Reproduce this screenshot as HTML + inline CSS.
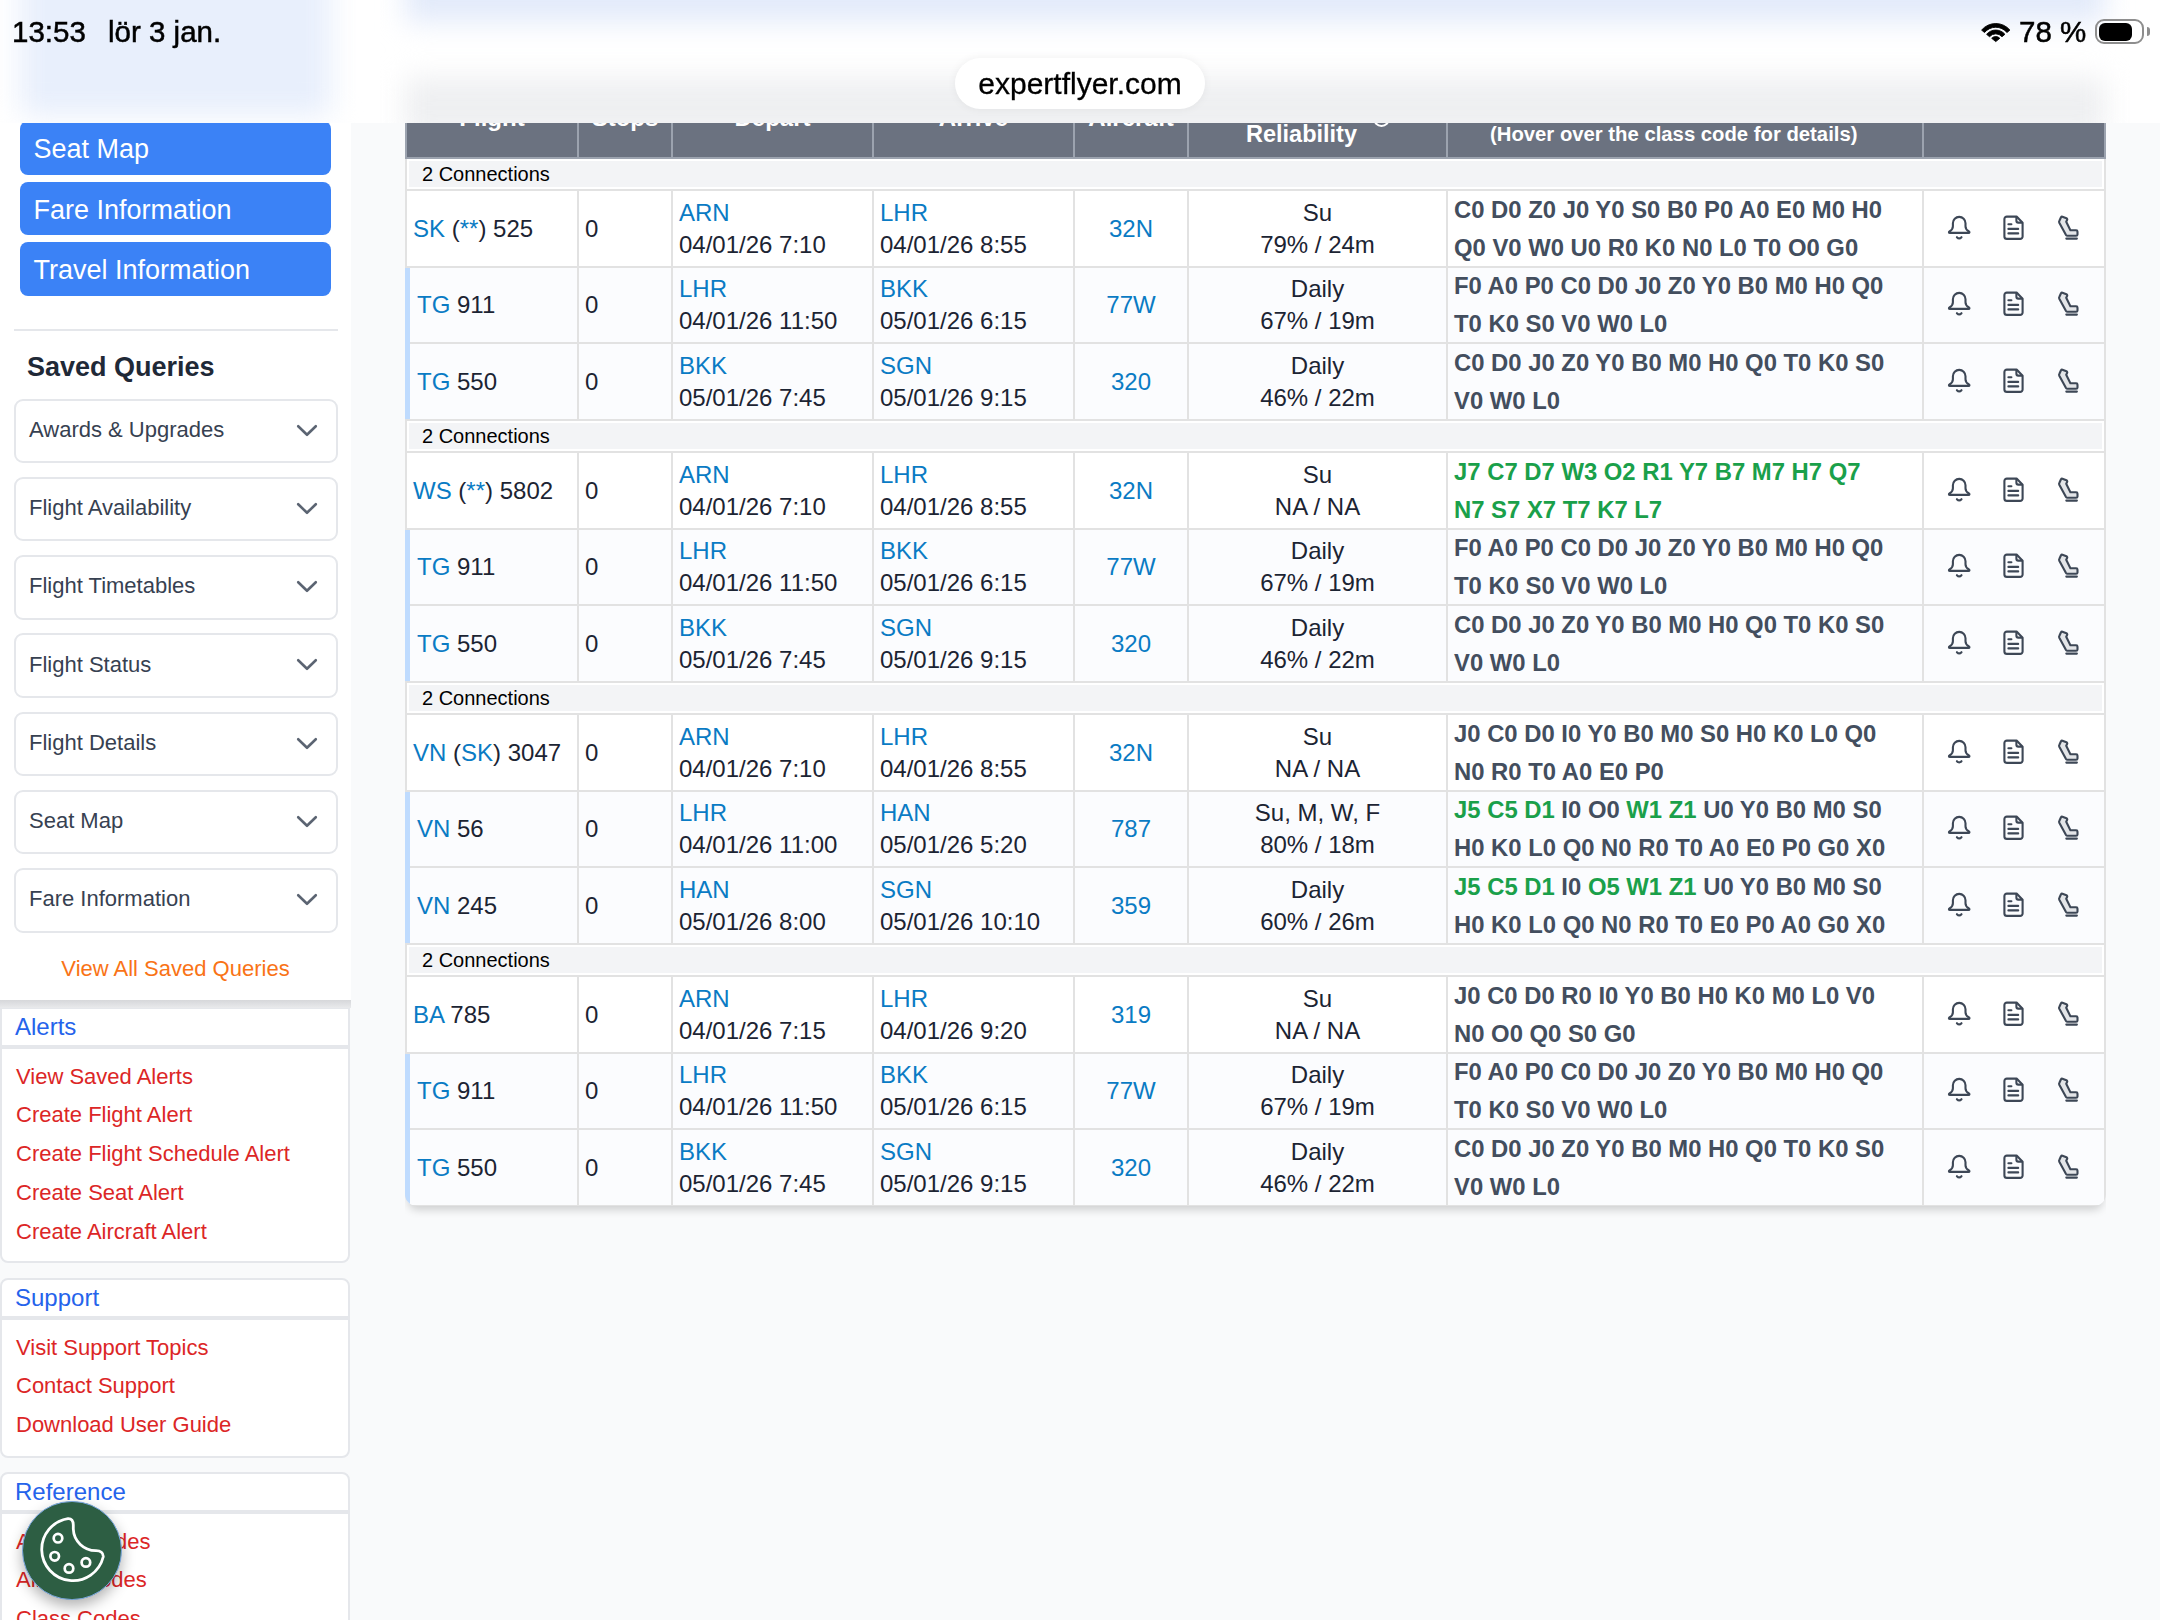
<!DOCTYPE html>
<html><head><meta charset="utf-8"><title>expertflyer</title>
<style>
*{box-sizing:border-box;margin:0;padding:0}
html,body{width:2160px;height:1620px;overflow:hidden;background:#f9fafb;font-family:"Liberation Sans",sans-serif;position:relative}
a{color:#0a7bc4;text-decoration:none}
.sidewhite{position:absolute;left:0;top:0;width:351px;height:1000px;background:#fff}
.sshadow{position:absolute;left:0;top:1000px;width:351px;height:8px;background:linear-gradient(#d6d7da,#e9eaec);z-index:2}
.btn{position:absolute;left:20px;width:311px;height:52px;background:#3b82f6;border-radius:8px;color:#fff;font-size:27px}
.btn span{position:absolute;left:13.5px;line-height:52px;white-space:nowrap}
.sep{position:absolute;left:14px;top:329px;width:324px;height:2px;background:#e5e7eb}
.sqh{position:absolute;left:27px;top:350px;font-size:27px;font-weight:bold;color:#1f2937;line-height:34px}
.dd{position:absolute;left:14px;width:324px;height:64.5px;border:2px solid #e5e7eb;border-radius:9px;background:#fff}
.dd span{position:absolute;left:13px;top:-0.7px;line-height:60px;font-size:22px;color:#374151}
.chev{position:absolute;left:279px;top:21px}
.viewall{position:absolute;left:0;width:351px;top:951.5px;text-align:center;font-size:22px;color:#f97316;line-height:34px}
.card{position:absolute;left:0;width:350px;background:#fff;border:2px solid #e5e7eb;border-radius:8px;overflow:hidden}
.ch{position:absolute;left:13px;top:0px;height:36px;line-height:36px;font-size:24px;color:#2563eb}
.chb{position:absolute;left:0;top:36px;width:100%;height:4px;background:#e5e7eb}
.links{position:absolute;left:14px;margin-top:-1.5px;font-size:22px;color:#dc2626;line-height:38.8px}
.cookie{position:absolute;left:22.3px;top:1500.5px;width:99.5px;height:99.5px;border-radius:50%;background:#2d5e43;border:1.5px solid #7aa7e0;box-shadow:0 6px 14px rgba(0,0,0,0.3)}
.tablebox{position:absolute;left:405px;top:0;width:1701px;height:1206px;border-radius:0 0 12px 12px;box-shadow:0 7px 9px -3px rgba(0,0,0,0.17);background:#e2e2e2;clip-path:inset(0px 0px -40px 0px)}
.tclip{position:absolute;left:0;top:0;width:2160px;height:1620px;clip-path:inset(0px 54px 414px 405px round 0 0 12px 12px)}
.thead{position:absolute;left:405px;top:60px;width:1701px;height:99px;background:#6b7280;border:2px solid #9ca3af;border-top:0}
.th,.th2{position:absolute;top:101px;color:#fff;font-weight:bold;font-size:24px;line-height:32px;white-space:nowrap}
.th2{font-size:23.5px}
.th{text-align:center}
.th{top:102px}
.th3{position:absolute;color:#fff;font-weight:bold;font-size:20.3px;line-height:28px;white-space:nowrap}
.infoc{position:absolute;left:1373px;top:110px;width:17px;height:17px;border:2px solid #fff;border-radius:50%}
.hvl{position:absolute;top:60px;width:2px;height:97px;background:#9ca3af}
.connw{position:absolute;left:407px;width:1697px;height:30px;background:#fff}
.conn{position:absolute;left:409px;width:1693px;height:26px;background:#f3f4f6}
.conn span{position:absolute;left:13px;top:-1px;font-size:20px;line-height:28px;color:#000}
.hl{position:absolute;left:407px;width:1697px;height:2px;background:#e2e2e2}
.row{position:absolute;left:407px;width:1697px;background:#fff}
.row.sub{background:#fbfcfe}
.vl{position:absolute;width:2px;background:#e2e2e2}
.stripe{position:absolute;left:405px;width:4.5px;background:#bfdbfe}
.t1,.t2{position:absolute;font-size:24px;line-height:32px;color:#1c2433;white-space:nowrap}
.ctr{text-align:center}
.cc{position:absolute;font-size:23.85px;line-height:38px;font-weight:bold;color:#434e5e;white-space:nowrap}
.g{color:#1aa04a}
.ic{position:absolute}
.tb{position:absolute;left:0;top:0;width:2160px;height:123px;overflow:hidden;background:#fff}
.blurwrap{position:absolute;left:0;top:0;width:2160px;height:123px;filter:blur(14px)}
.status-l{position:absolute;left:12px;top:14px;font-size:29.5px;line-height:36px;color:#000;-webkit-text-stroke:0.5px #000}
.status-r{position:absolute;left:2019px;top:14px;font-size:29.5px;line-height:36px;color:#000;-webkit-text-stroke:0.5px #000}
.batt{position:absolute;left:2095.3px;top:19.3px;width:49px;height:25px;border:2px solid #8e8e8e;border-radius:9px}
.battin{position:absolute;left:1.6px;top:1.4px;width:33px;height:18px;background:#000;border-radius:6px}
.nub{position:absolute;left:2146.5px;top:27px;width:3.5px;height:9px;background:#8e8e8e;border-radius:0 4px 4px 0}
.pill{position:absolute;left:955px;top:58px;width:250px;height:51px;background:#fff;border-radius:26px;box-shadow:0 0 10px rgba(0,0,0,0.06);text-align:center;font-size:30px;line-height:51px;color:#000;-webkit-text-stroke:0.3px #000}
</style></head><body>
<div class="sidewhite"></div>
<div class="btn" style="top:121px;height:54px"><span style="top:1.6px">Seat Map</span></div>
<div class="btn" style="top:182px;height:53px"><span style="top:1.6px">Fare Information</span></div>
<div class="btn" style="top:242px;height:54px"><span style="top:1.6px">Travel Information</span></div>
<div class="sep"></div>
<div class="sqh">Saved Queries</div>
<div class="dd" style="top:398.5px"><span>Awards &amp; Upgrades</span><svg class="chev" width="24" height="16" viewBox="0 0 24 16"><path d="M3.2 4.2l8.8 8.6 8.8-8.6" fill="none" stroke="#5b6472" stroke-width="2.6" stroke-linecap="round" stroke-linejoin="round"/></svg></div>
<div class="dd" style="top:476.8px"><span>Flight Availability</span><svg class="chev" width="24" height="16" viewBox="0 0 24 16"><path d="M3.2 4.2l8.8 8.6 8.8-8.6" fill="none" stroke="#5b6472" stroke-width="2.6" stroke-linecap="round" stroke-linejoin="round"/></svg></div>
<div class="dd" style="top:555.0px"><span>Flight Timetables</span><svg class="chev" width="24" height="16" viewBox="0 0 24 16"><path d="M3.2 4.2l8.8 8.6 8.8-8.6" fill="none" stroke="#5b6472" stroke-width="2.6" stroke-linecap="round" stroke-linejoin="round"/></svg></div>
<div class="dd" style="top:633.3px"><span>Flight Status</span><svg class="chev" width="24" height="16" viewBox="0 0 24 16"><path d="M3.2 4.2l8.8 8.6 8.8-8.6" fill="none" stroke="#5b6472" stroke-width="2.6" stroke-linecap="round" stroke-linejoin="round"/></svg></div>
<div class="dd" style="top:711.6px"><span>Flight Details</span><svg class="chev" width="24" height="16" viewBox="0 0 24 16"><path d="M3.2 4.2l8.8 8.6 8.8-8.6" fill="none" stroke="#5b6472" stroke-width="2.6" stroke-linecap="round" stroke-linejoin="round"/></svg></div>
<div class="dd" style="top:789.8px"><span>Seat Map</span><svg class="chev" width="24" height="16" viewBox="0 0 24 16"><path d="M3.2 4.2l8.8 8.6 8.8-8.6" fill="none" stroke="#5b6472" stroke-width="2.6" stroke-linecap="round" stroke-linejoin="round"/></svg></div>
<div class="dd" style="top:868.1px"><span>Fare Information</span><svg class="chev" width="24" height="16" viewBox="0 0 24 16"><path d="M3.2 4.2l8.8 8.6 8.8-8.6" fill="none" stroke="#5b6472" stroke-width="2.6" stroke-linecap="round" stroke-linejoin="round"/></svg></div>
<div class="viewall">View All Saved Queries</div>
<div class="sshadow"></div>
<div class="card" style="top:1007px;height:256px;border-top-left-radius:0;border-top-right-radius:0"><div class="ch">Alerts</div><div class="chb"></div><div class="links" style="top:50px">View Saved Alerts<br>Create Flight Alert<br>Create Flight Schedule Alert<br>Create Seat Alert<br>Create Aircraft Alert</div></div>
<div class="card" style="top:1278px;height:180px"><div class="ch">Support</div><div class="chb"></div><div class="links" style="top:50px">Visit Support Topics<br>Contact Support<br>Download User Guide</div></div>
<div class="card" style="top:1472px;height:200px"><div class="ch">Reference</div><div class="chb"></div><div class="links" style="top:50px">Airport Codes<br>Airline Codes<br>Class Codes</div></div>
<div class="cookie"><svg width="100" height="100" viewBox="0 0 100 100" style="position:absolute;left:-1.3px;top:-0.6px"><path d="M46 17.6C49.5 17.4 51.3 20 51.3 24V28A22.5 22.5 0 0 0 74 49.6C78.5 49.6 81.6 52 81.2 56A31.2 31.2 0 1 1 46 17.6Z" fill="none" stroke="#fff" stroke-width="2.8" stroke-linejoin="round"/><circle cx="36" cy="37.2" r="4.3" fill="none" stroke="#fff" stroke-width="2.7"/><circle cx="32.7" cy="55.3" r="4.3" fill="none" stroke="#fff" stroke-width="2.7"/><circle cx="47" cy="67.4" r="4.3" fill="none" stroke="#fff" stroke-width="2.7"/><circle cx="63.9" cy="61.4" r="4.3" fill="none" stroke="#fff" stroke-width="2.7"/></svg></div>
<div class="tablebox"></div>
<div class="tclip">
<div class="thead"></div>
<div class="th" style="left:407px;width:170px">Flight</div>
<div class="th" style="left:579px;width:92px">Stops</div>
<div class="th" style="left:673px;width:199px">Depart</div>
<div class="th" style="left:874px;width:199px">Arrive</div>
<div class="th" style="left:1075px;width:112px">Aircraft</div>
<div class="th2" style="left:1246px;top:117.8px">Reliability</div>
<div class="infoc"></div>
<div class="th3" style="left:1490px;top:120px">(Hover over the class code for details)</div>
<div class="hvl" style="left:577px"></div>
<div class="hvl" style="left:671px"></div>
<div class="hvl" style="left:872px"></div>
<div class="hvl" style="left:1073px"></div>
<div class="hvl" style="left:1187px"></div>
<div class="hvl" style="left:1446px"></div>
<div class="hvl" style="left:1922px"></div>
<div class="connw" style="top:159px"></div>
<div class="conn" style="top:161px"><span>2 Connections</span></div>
<div class="hl" style="top:189px"></div>
<div class="row" style="top:191px;height:75px"></div>
<div class="hl" style="top:266px"></div>
<div class="vl" style="left:577px;top:191px;height:75px"></div>
<div class="vl" style="left:671px;top:191px;height:75px"></div>
<div class="vl" style="left:872px;top:191px;height:75px"></div>
<div class="vl" style="left:1073px;top:191px;height:75px"></div>
<div class="vl" style="left:1187px;top:191px;height:75px"></div>
<div class="vl" style="left:1446px;top:191px;height:75px"></div>
<div class="vl" style="left:1922px;top:191px;height:75px"></div>
<div class="t1" style="left:413px;top:212.5px"><a>SK</a> (<a>**</a>) 525</div>
<div class="t1" style="left:585px;top:212.5px">0</div>
<div class="t2" style="left:679px;top:196.5px"><a>ARN</a><br>04/01/26 7:10</div>
<div class="t2" style="left:880px;top:196.5px"><a>LHR</a><br>04/01/26 8:55</div>
<div class="t1 ctr" style="left:1075px;width:112px;top:212.5px"><a>32N</a></div>
<div class="t2 ctr" style="left:1189px;width:257px;top:196.5px">Su<br>79% / 24m</div>
<div class="cc" style="left:1454px;top:190.5px">C0 D0 Z0 J0 Y0 S0 B0 P0 A0 E0 M0 H0<br>Q0 V0 W0 U0 R0 K0 N0 L0 T0 O0 G0</div>
<svg class="ic" style="left:1944.0px;top:213.5px" width="30" height="30" viewBox="0 0 30 30"><path d="M8.9 9.2A6.3 6.3 0 0 1 21.5 9.2V12.2C21.5 14.6 22.4 15.9 24.6 17.1C25.9 17.8 25.7 18.9 24.4 18.9H6C4.7 18.9 4.5 17.8 5.8 17.1C8 15.9 8.9 14.6 8.9 12.2Z" fill="none" stroke="#3d4756" stroke-width="2.1" stroke-linejoin="round"/><path d="M12.9 23.2Q15.2 25.6 17.5 23.2" fill="none" stroke="#3d4756" stroke-width="2.1" stroke-linecap="round"/></svg>
<svg class="ic" style="left:1999.0px;top:213.5px" width="30" height="30" viewBox="0 0 30 30"><path d="M7.9 2.6H17.6L23.6 8.7V22.4A2.5 2.5 0 0 1 21.1 24.9H7.9A2.5 2.5 0 0 1 5.4 22.4V5.1A2.5 2.5 0 0 1 7.9 2.6Z" fill="none" stroke="#3d4756" stroke-width="2.1" stroke-linejoin="round"/><path d="M17.4 2.9V6.8A1.8 1.8 0 0 0 19.2 8.6H23.3" fill="none" stroke="#3d4756" stroke-width="2.1" stroke-linejoin="round"/><path d="M9.4 10.3H12.4M9.4 14.9H19.2M9.4 19.4H19.2" stroke="#3d4756" stroke-width="2.1" stroke-linecap="round"/></svg>
<svg class="ic" style="left:2054.0px;top:213.5px" width="30" height="30" viewBox="0 0 30 30"><path d="M8.4 2.7L12.4 4.3C13.2 4.6 13.5 5.4 13.1 6.1L12.2 7.8L16.4 16.3H22.1C22.9 16.3 23.5 16.9 23.5 17.7V20.4C23.5 21.2 22.9 21.8 22.1 21.8H13.4C12.8 21.8 12.3 21.5 12 21L5.3 8.7C5 8.1 5 7.5 5.3 7L7 3.3C7.3 2.8 7.8 2.5 8.4 2.7Z" fill="#e3e5e8" stroke="#3d4756" stroke-width="2.1" stroke-linejoin="round"/><path d="M12.3 24.6H22.9" stroke="#3d4756" stroke-width="2.1" stroke-linecap="round"/></svg>
<div class="row sub" style="top:268px;height:74px"></div>
<div class="hl" style="top:342px"></div>
<div class="vl" style="left:577px;top:268px;height:74px"></div>
<div class="vl" style="left:671px;top:268px;height:74px"></div>
<div class="vl" style="left:872px;top:268px;height:74px"></div>
<div class="vl" style="left:1073px;top:268px;height:74px"></div>
<div class="vl" style="left:1187px;top:268px;height:74px"></div>
<div class="vl" style="left:1446px;top:268px;height:74px"></div>
<div class="vl" style="left:1922px;top:268px;height:74px"></div>
<div class="stripe" style="top:268px;height:74px"></div>
<div class="t1" style="left:417px;top:289.0px"><a>TG</a> 911</div>
<div class="t1" style="left:585px;top:289.0px">0</div>
<div class="t2" style="left:679px;top:273.0px"><a>LHR</a><br>04/01/26 11:50</div>
<div class="t2" style="left:880px;top:273.0px"><a>BKK</a><br>05/01/26 6:15</div>
<div class="t1 ctr" style="left:1075px;width:112px;top:289.0px"><a>77W</a></div>
<div class="t2 ctr" style="left:1189px;width:257px;top:273.0px">Daily<br>67% / 19m</div>
<div class="cc" style="left:1454px;top:267.0px">F0 A0 P0 C0 D0 J0 Z0 Y0 B0 M0 H0 Q0<br>T0 K0 S0 V0 W0 L0</div>
<svg class="ic" style="left:1944.0px;top:290.0px" width="30" height="30" viewBox="0 0 30 30"><path d="M8.9 9.2A6.3 6.3 0 0 1 21.5 9.2V12.2C21.5 14.6 22.4 15.9 24.6 17.1C25.9 17.8 25.7 18.9 24.4 18.9H6C4.7 18.9 4.5 17.8 5.8 17.1C8 15.9 8.9 14.6 8.9 12.2Z" fill="none" stroke="#3d4756" stroke-width="2.1" stroke-linejoin="round"/><path d="M12.9 23.2Q15.2 25.6 17.5 23.2" fill="none" stroke="#3d4756" stroke-width="2.1" stroke-linecap="round"/></svg>
<svg class="ic" style="left:1999.0px;top:290.0px" width="30" height="30" viewBox="0 0 30 30"><path d="M7.9 2.6H17.6L23.6 8.7V22.4A2.5 2.5 0 0 1 21.1 24.9H7.9A2.5 2.5 0 0 1 5.4 22.4V5.1A2.5 2.5 0 0 1 7.9 2.6Z" fill="none" stroke="#3d4756" stroke-width="2.1" stroke-linejoin="round"/><path d="M17.4 2.9V6.8A1.8 1.8 0 0 0 19.2 8.6H23.3" fill="none" stroke="#3d4756" stroke-width="2.1" stroke-linejoin="round"/><path d="M9.4 10.3H12.4M9.4 14.9H19.2M9.4 19.4H19.2" stroke="#3d4756" stroke-width="2.1" stroke-linecap="round"/></svg>
<svg class="ic" style="left:2054.0px;top:290.0px" width="30" height="30" viewBox="0 0 30 30"><path d="M8.4 2.7L12.4 4.3C13.2 4.6 13.5 5.4 13.1 6.1L12.2 7.8L16.4 16.3H22.1C22.9 16.3 23.5 16.9 23.5 17.7V20.4C23.5 21.2 22.9 21.8 22.1 21.8H13.4C12.8 21.8 12.3 21.5 12 21L5.3 8.7C5 8.1 5 7.5 5.3 7L7 3.3C7.3 2.8 7.8 2.5 8.4 2.7Z" fill="#e3e5e8" stroke="#3d4756" stroke-width="2.1" stroke-linejoin="round"/><path d="M12.3 24.6H22.9" stroke="#3d4756" stroke-width="2.1" stroke-linecap="round"/></svg>
<div class="row sub" style="top:344px;height:75px"></div>
<div class="vl" style="left:577px;top:344px;height:75px"></div>
<div class="vl" style="left:671px;top:344px;height:75px"></div>
<div class="vl" style="left:872px;top:344px;height:75px"></div>
<div class="vl" style="left:1073px;top:344px;height:75px"></div>
<div class="vl" style="left:1187px;top:344px;height:75px"></div>
<div class="vl" style="left:1446px;top:344px;height:75px"></div>
<div class="vl" style="left:1922px;top:344px;height:75px"></div>
<div class="stripe" style="top:342px;height:77px"></div>
<div class="t1" style="left:417px;top:365.5px"><a>TG</a> 550</div>
<div class="t1" style="left:585px;top:365.5px">0</div>
<div class="t2" style="left:679px;top:349.5px"><a>BKK</a><br>05/01/26 7:45</div>
<div class="t2" style="left:880px;top:349.5px"><a>SGN</a><br>05/01/26 9:15</div>
<div class="t1 ctr" style="left:1075px;width:112px;top:365.5px"><a>320</a></div>
<div class="t2 ctr" style="left:1189px;width:257px;top:349.5px">Daily<br>46% / 22m</div>
<div class="cc" style="left:1454px;top:343.5px">C0 D0 J0 Z0 Y0 B0 M0 H0 Q0 T0 K0 S0<br>V0 W0 L0</div>
<svg class="ic" style="left:1944.0px;top:366.5px" width="30" height="30" viewBox="0 0 30 30"><path d="M8.9 9.2A6.3 6.3 0 0 1 21.5 9.2V12.2C21.5 14.6 22.4 15.9 24.6 17.1C25.9 17.8 25.7 18.9 24.4 18.9H6C4.7 18.9 4.5 17.8 5.8 17.1C8 15.9 8.9 14.6 8.9 12.2Z" fill="none" stroke="#3d4756" stroke-width="2.1" stroke-linejoin="round"/><path d="M12.9 23.2Q15.2 25.6 17.5 23.2" fill="none" stroke="#3d4756" stroke-width="2.1" stroke-linecap="round"/></svg>
<svg class="ic" style="left:1999.0px;top:366.5px" width="30" height="30" viewBox="0 0 30 30"><path d="M7.9 2.6H17.6L23.6 8.7V22.4A2.5 2.5 0 0 1 21.1 24.9H7.9A2.5 2.5 0 0 1 5.4 22.4V5.1A2.5 2.5 0 0 1 7.9 2.6Z" fill="none" stroke="#3d4756" stroke-width="2.1" stroke-linejoin="round"/><path d="M17.4 2.9V6.8A1.8 1.8 0 0 0 19.2 8.6H23.3" fill="none" stroke="#3d4756" stroke-width="2.1" stroke-linejoin="round"/><path d="M9.4 10.3H12.4M9.4 14.9H19.2M9.4 19.4H19.2" stroke="#3d4756" stroke-width="2.1" stroke-linecap="round"/></svg>
<svg class="ic" style="left:2054.0px;top:366.5px" width="30" height="30" viewBox="0 0 30 30"><path d="M8.4 2.7L12.4 4.3C13.2 4.6 13.5 5.4 13.1 6.1L12.2 7.8L16.4 16.3H22.1C22.9 16.3 23.5 16.9 23.5 17.7V20.4C23.5 21.2 22.9 21.8 22.1 21.8H13.4C12.8 21.8 12.3 21.5 12 21L5.3 8.7C5 8.1 5 7.5 5.3 7L7 3.3C7.3 2.8 7.8 2.5 8.4 2.7Z" fill="#e3e5e8" stroke="#3d4756" stroke-width="2.1" stroke-linejoin="round"/><path d="M12.3 24.6H22.9" stroke="#3d4756" stroke-width="2.1" stroke-linecap="round"/></svg>
<div class="connw" style="top:421px"></div>
<div class="conn" style="top:423px"><span>2 Connections</span></div>
<div class="hl" style="top:451px"></div>
<div class="row" style="top:453px;height:75px"></div>
<div class="hl" style="top:528px"></div>
<div class="vl" style="left:577px;top:453px;height:75px"></div>
<div class="vl" style="left:671px;top:453px;height:75px"></div>
<div class="vl" style="left:872px;top:453px;height:75px"></div>
<div class="vl" style="left:1073px;top:453px;height:75px"></div>
<div class="vl" style="left:1187px;top:453px;height:75px"></div>
<div class="vl" style="left:1446px;top:453px;height:75px"></div>
<div class="vl" style="left:1922px;top:453px;height:75px"></div>
<div class="t1" style="left:413px;top:474.5px"><a>WS</a> (<a>**</a>) 5802</div>
<div class="t1" style="left:585px;top:474.5px">0</div>
<div class="t2" style="left:679px;top:458.5px"><a>ARN</a><br>04/01/26 7:10</div>
<div class="t2" style="left:880px;top:458.5px"><a>LHR</a><br>04/01/26 8:55</div>
<div class="t1 ctr" style="left:1075px;width:112px;top:474.5px"><a>32N</a></div>
<div class="t2 ctr" style="left:1189px;width:257px;top:458.5px">Su<br>NA / NA</div>
<div class="cc" style="left:1454px;top:452.5px"><span class="g">J7</span> <span class="g">C7</span> <span class="g">D7</span> <span class="g">W3</span> <span class="g">O2</span> <span class="g">R1</span> <span class="g">Y7</span> <span class="g">B7</span> <span class="g">M7</span> <span class="g">H7</span> <span class="g">Q7</span><br><span class="g">N7</span> <span class="g">S7</span> <span class="g">X7</span> <span class="g">T7</span> <span class="g">K7</span> <span class="g">L7</span></div>
<svg class="ic" style="left:1944.0px;top:475.5px" width="30" height="30" viewBox="0 0 30 30"><path d="M8.9 9.2A6.3 6.3 0 0 1 21.5 9.2V12.2C21.5 14.6 22.4 15.9 24.6 17.1C25.9 17.8 25.7 18.9 24.4 18.9H6C4.7 18.9 4.5 17.8 5.8 17.1C8 15.9 8.9 14.6 8.9 12.2Z" fill="none" stroke="#3d4756" stroke-width="2.1" stroke-linejoin="round"/><path d="M12.9 23.2Q15.2 25.6 17.5 23.2" fill="none" stroke="#3d4756" stroke-width="2.1" stroke-linecap="round"/></svg>
<svg class="ic" style="left:1999.0px;top:475.5px" width="30" height="30" viewBox="0 0 30 30"><path d="M7.9 2.6H17.6L23.6 8.7V22.4A2.5 2.5 0 0 1 21.1 24.9H7.9A2.5 2.5 0 0 1 5.4 22.4V5.1A2.5 2.5 0 0 1 7.9 2.6Z" fill="none" stroke="#3d4756" stroke-width="2.1" stroke-linejoin="round"/><path d="M17.4 2.9V6.8A1.8 1.8 0 0 0 19.2 8.6H23.3" fill="none" stroke="#3d4756" stroke-width="2.1" stroke-linejoin="round"/><path d="M9.4 10.3H12.4M9.4 14.9H19.2M9.4 19.4H19.2" stroke="#3d4756" stroke-width="2.1" stroke-linecap="round"/></svg>
<svg class="ic" style="left:2054.0px;top:475.5px" width="30" height="30" viewBox="0 0 30 30"><path d="M8.4 2.7L12.4 4.3C13.2 4.6 13.5 5.4 13.1 6.1L12.2 7.8L16.4 16.3H22.1C22.9 16.3 23.5 16.9 23.5 17.7V20.4C23.5 21.2 22.9 21.8 22.1 21.8H13.4C12.8 21.8 12.3 21.5 12 21L5.3 8.7C5 8.1 5 7.5 5.3 7L7 3.3C7.3 2.8 7.8 2.5 8.4 2.7Z" fill="#e3e5e8" stroke="#3d4756" stroke-width="2.1" stroke-linejoin="round"/><path d="M12.3 24.6H22.9" stroke="#3d4756" stroke-width="2.1" stroke-linecap="round"/></svg>
<div class="row sub" style="top:530px;height:74px"></div>
<div class="hl" style="top:604px"></div>
<div class="vl" style="left:577px;top:530px;height:74px"></div>
<div class="vl" style="left:671px;top:530px;height:74px"></div>
<div class="vl" style="left:872px;top:530px;height:74px"></div>
<div class="vl" style="left:1073px;top:530px;height:74px"></div>
<div class="vl" style="left:1187px;top:530px;height:74px"></div>
<div class="vl" style="left:1446px;top:530px;height:74px"></div>
<div class="vl" style="left:1922px;top:530px;height:74px"></div>
<div class="stripe" style="top:530px;height:74px"></div>
<div class="t1" style="left:417px;top:551.0px"><a>TG</a> 911</div>
<div class="t1" style="left:585px;top:551.0px">0</div>
<div class="t2" style="left:679px;top:535.0px"><a>LHR</a><br>04/01/26 11:50</div>
<div class="t2" style="left:880px;top:535.0px"><a>BKK</a><br>05/01/26 6:15</div>
<div class="t1 ctr" style="left:1075px;width:112px;top:551.0px"><a>77W</a></div>
<div class="t2 ctr" style="left:1189px;width:257px;top:535.0px">Daily<br>67% / 19m</div>
<div class="cc" style="left:1454px;top:529.0px">F0 A0 P0 C0 D0 J0 Z0 Y0 B0 M0 H0 Q0<br>T0 K0 S0 V0 W0 L0</div>
<svg class="ic" style="left:1944.0px;top:552.0px" width="30" height="30" viewBox="0 0 30 30"><path d="M8.9 9.2A6.3 6.3 0 0 1 21.5 9.2V12.2C21.5 14.6 22.4 15.9 24.6 17.1C25.9 17.8 25.7 18.9 24.4 18.9H6C4.7 18.9 4.5 17.8 5.8 17.1C8 15.9 8.9 14.6 8.9 12.2Z" fill="none" stroke="#3d4756" stroke-width="2.1" stroke-linejoin="round"/><path d="M12.9 23.2Q15.2 25.6 17.5 23.2" fill="none" stroke="#3d4756" stroke-width="2.1" stroke-linecap="round"/></svg>
<svg class="ic" style="left:1999.0px;top:552.0px" width="30" height="30" viewBox="0 0 30 30"><path d="M7.9 2.6H17.6L23.6 8.7V22.4A2.5 2.5 0 0 1 21.1 24.9H7.9A2.5 2.5 0 0 1 5.4 22.4V5.1A2.5 2.5 0 0 1 7.9 2.6Z" fill="none" stroke="#3d4756" stroke-width="2.1" stroke-linejoin="round"/><path d="M17.4 2.9V6.8A1.8 1.8 0 0 0 19.2 8.6H23.3" fill="none" stroke="#3d4756" stroke-width="2.1" stroke-linejoin="round"/><path d="M9.4 10.3H12.4M9.4 14.9H19.2M9.4 19.4H19.2" stroke="#3d4756" stroke-width="2.1" stroke-linecap="round"/></svg>
<svg class="ic" style="left:2054.0px;top:552.0px" width="30" height="30" viewBox="0 0 30 30"><path d="M8.4 2.7L12.4 4.3C13.2 4.6 13.5 5.4 13.1 6.1L12.2 7.8L16.4 16.3H22.1C22.9 16.3 23.5 16.9 23.5 17.7V20.4C23.5 21.2 22.9 21.8 22.1 21.8H13.4C12.8 21.8 12.3 21.5 12 21L5.3 8.7C5 8.1 5 7.5 5.3 7L7 3.3C7.3 2.8 7.8 2.5 8.4 2.7Z" fill="#e3e5e8" stroke="#3d4756" stroke-width="2.1" stroke-linejoin="round"/><path d="M12.3 24.6H22.9" stroke="#3d4756" stroke-width="2.1" stroke-linecap="round"/></svg>
<div class="row sub" style="top:606px;height:75px"></div>
<div class="vl" style="left:577px;top:606px;height:75px"></div>
<div class="vl" style="left:671px;top:606px;height:75px"></div>
<div class="vl" style="left:872px;top:606px;height:75px"></div>
<div class="vl" style="left:1073px;top:606px;height:75px"></div>
<div class="vl" style="left:1187px;top:606px;height:75px"></div>
<div class="vl" style="left:1446px;top:606px;height:75px"></div>
<div class="vl" style="left:1922px;top:606px;height:75px"></div>
<div class="stripe" style="top:604px;height:77px"></div>
<div class="t1" style="left:417px;top:627.5px"><a>TG</a> 550</div>
<div class="t1" style="left:585px;top:627.5px">0</div>
<div class="t2" style="left:679px;top:611.5px"><a>BKK</a><br>05/01/26 7:45</div>
<div class="t2" style="left:880px;top:611.5px"><a>SGN</a><br>05/01/26 9:15</div>
<div class="t1 ctr" style="left:1075px;width:112px;top:627.5px"><a>320</a></div>
<div class="t2 ctr" style="left:1189px;width:257px;top:611.5px">Daily<br>46% / 22m</div>
<div class="cc" style="left:1454px;top:605.5px">C0 D0 J0 Z0 Y0 B0 M0 H0 Q0 T0 K0 S0<br>V0 W0 L0</div>
<svg class="ic" style="left:1944.0px;top:628.5px" width="30" height="30" viewBox="0 0 30 30"><path d="M8.9 9.2A6.3 6.3 0 0 1 21.5 9.2V12.2C21.5 14.6 22.4 15.9 24.6 17.1C25.9 17.8 25.7 18.9 24.4 18.9H6C4.7 18.9 4.5 17.8 5.8 17.1C8 15.9 8.9 14.6 8.9 12.2Z" fill="none" stroke="#3d4756" stroke-width="2.1" stroke-linejoin="round"/><path d="M12.9 23.2Q15.2 25.6 17.5 23.2" fill="none" stroke="#3d4756" stroke-width="2.1" stroke-linecap="round"/></svg>
<svg class="ic" style="left:1999.0px;top:628.5px" width="30" height="30" viewBox="0 0 30 30"><path d="M7.9 2.6H17.6L23.6 8.7V22.4A2.5 2.5 0 0 1 21.1 24.9H7.9A2.5 2.5 0 0 1 5.4 22.4V5.1A2.5 2.5 0 0 1 7.9 2.6Z" fill="none" stroke="#3d4756" stroke-width="2.1" stroke-linejoin="round"/><path d="M17.4 2.9V6.8A1.8 1.8 0 0 0 19.2 8.6H23.3" fill="none" stroke="#3d4756" stroke-width="2.1" stroke-linejoin="round"/><path d="M9.4 10.3H12.4M9.4 14.9H19.2M9.4 19.4H19.2" stroke="#3d4756" stroke-width="2.1" stroke-linecap="round"/></svg>
<svg class="ic" style="left:2054.0px;top:628.5px" width="30" height="30" viewBox="0 0 30 30"><path d="M8.4 2.7L12.4 4.3C13.2 4.6 13.5 5.4 13.1 6.1L12.2 7.8L16.4 16.3H22.1C22.9 16.3 23.5 16.9 23.5 17.7V20.4C23.5 21.2 22.9 21.8 22.1 21.8H13.4C12.8 21.8 12.3 21.5 12 21L5.3 8.7C5 8.1 5 7.5 5.3 7L7 3.3C7.3 2.8 7.8 2.5 8.4 2.7Z" fill="#e3e5e8" stroke="#3d4756" stroke-width="2.1" stroke-linejoin="round"/><path d="M12.3 24.6H22.9" stroke="#3d4756" stroke-width="2.1" stroke-linecap="round"/></svg>
<div class="connw" style="top:683px"></div>
<div class="conn" style="top:685px"><span>2 Connections</span></div>
<div class="hl" style="top:713px"></div>
<div class="row" style="top:715px;height:75px"></div>
<div class="hl" style="top:790px"></div>
<div class="vl" style="left:577px;top:715px;height:75px"></div>
<div class="vl" style="left:671px;top:715px;height:75px"></div>
<div class="vl" style="left:872px;top:715px;height:75px"></div>
<div class="vl" style="left:1073px;top:715px;height:75px"></div>
<div class="vl" style="left:1187px;top:715px;height:75px"></div>
<div class="vl" style="left:1446px;top:715px;height:75px"></div>
<div class="vl" style="left:1922px;top:715px;height:75px"></div>
<div class="t1" style="left:413px;top:736.5px"><a>VN</a> (<a>SK</a>) 3047</div>
<div class="t1" style="left:585px;top:736.5px">0</div>
<div class="t2" style="left:679px;top:720.5px"><a>ARN</a><br>04/01/26 7:10</div>
<div class="t2" style="left:880px;top:720.5px"><a>LHR</a><br>04/01/26 8:55</div>
<div class="t1 ctr" style="left:1075px;width:112px;top:736.5px"><a>32N</a></div>
<div class="t2 ctr" style="left:1189px;width:257px;top:720.5px">Su<br>NA / NA</div>
<div class="cc" style="left:1454px;top:714.5px">J0 C0 D0 I0 Y0 B0 M0 S0 H0 K0 L0 Q0<br>N0 R0 T0 A0 E0 P0</div>
<svg class="ic" style="left:1944.0px;top:737.5px" width="30" height="30" viewBox="0 0 30 30"><path d="M8.9 9.2A6.3 6.3 0 0 1 21.5 9.2V12.2C21.5 14.6 22.4 15.9 24.6 17.1C25.9 17.8 25.7 18.9 24.4 18.9H6C4.7 18.9 4.5 17.8 5.8 17.1C8 15.9 8.9 14.6 8.9 12.2Z" fill="none" stroke="#3d4756" stroke-width="2.1" stroke-linejoin="round"/><path d="M12.9 23.2Q15.2 25.6 17.5 23.2" fill="none" stroke="#3d4756" stroke-width="2.1" stroke-linecap="round"/></svg>
<svg class="ic" style="left:1999.0px;top:737.5px" width="30" height="30" viewBox="0 0 30 30"><path d="M7.9 2.6H17.6L23.6 8.7V22.4A2.5 2.5 0 0 1 21.1 24.9H7.9A2.5 2.5 0 0 1 5.4 22.4V5.1A2.5 2.5 0 0 1 7.9 2.6Z" fill="none" stroke="#3d4756" stroke-width="2.1" stroke-linejoin="round"/><path d="M17.4 2.9V6.8A1.8 1.8 0 0 0 19.2 8.6H23.3" fill="none" stroke="#3d4756" stroke-width="2.1" stroke-linejoin="round"/><path d="M9.4 10.3H12.4M9.4 14.9H19.2M9.4 19.4H19.2" stroke="#3d4756" stroke-width="2.1" stroke-linecap="round"/></svg>
<svg class="ic" style="left:2054.0px;top:737.5px" width="30" height="30" viewBox="0 0 30 30"><path d="M8.4 2.7L12.4 4.3C13.2 4.6 13.5 5.4 13.1 6.1L12.2 7.8L16.4 16.3H22.1C22.9 16.3 23.5 16.9 23.5 17.7V20.4C23.5 21.2 22.9 21.8 22.1 21.8H13.4C12.8 21.8 12.3 21.5 12 21L5.3 8.7C5 8.1 5 7.5 5.3 7L7 3.3C7.3 2.8 7.8 2.5 8.4 2.7Z" fill="#e3e5e8" stroke="#3d4756" stroke-width="2.1" stroke-linejoin="round"/><path d="M12.3 24.6H22.9" stroke="#3d4756" stroke-width="2.1" stroke-linecap="round"/></svg>
<div class="row sub" style="top:792px;height:74px"></div>
<div class="hl" style="top:866px"></div>
<div class="vl" style="left:577px;top:792px;height:74px"></div>
<div class="vl" style="left:671px;top:792px;height:74px"></div>
<div class="vl" style="left:872px;top:792px;height:74px"></div>
<div class="vl" style="left:1073px;top:792px;height:74px"></div>
<div class="vl" style="left:1187px;top:792px;height:74px"></div>
<div class="vl" style="left:1446px;top:792px;height:74px"></div>
<div class="vl" style="left:1922px;top:792px;height:74px"></div>
<div class="stripe" style="top:792px;height:74px"></div>
<div class="t1" style="left:417px;top:813.0px"><a>VN</a> 56</div>
<div class="t1" style="left:585px;top:813.0px">0</div>
<div class="t2" style="left:679px;top:797.0px"><a>LHR</a><br>04/01/26 11:00</div>
<div class="t2" style="left:880px;top:797.0px"><a>HAN</a><br>05/01/26 5:20</div>
<div class="t1 ctr" style="left:1075px;width:112px;top:813.0px"><a>787</a></div>
<div class="t2 ctr" style="left:1189px;width:257px;top:797.0px">Su, M, W, F<br>80% / 18m</div>
<div class="cc" style="left:1454px;top:791.0px"><span class="g">J5</span> <span class="g">C5</span> <span class="g">D1</span> I0 O0 <span class="g">W1</span> <span class="g">Z1</span> U0 Y0 B0 M0 S0<br>H0 K0 L0 Q0 N0 R0 T0 A0 E0 P0 G0 X0</div>
<svg class="ic" style="left:1944.0px;top:814.0px" width="30" height="30" viewBox="0 0 30 30"><path d="M8.9 9.2A6.3 6.3 0 0 1 21.5 9.2V12.2C21.5 14.6 22.4 15.9 24.6 17.1C25.9 17.8 25.7 18.9 24.4 18.9H6C4.7 18.9 4.5 17.8 5.8 17.1C8 15.9 8.9 14.6 8.9 12.2Z" fill="none" stroke="#3d4756" stroke-width="2.1" stroke-linejoin="round"/><path d="M12.9 23.2Q15.2 25.6 17.5 23.2" fill="none" stroke="#3d4756" stroke-width="2.1" stroke-linecap="round"/></svg>
<svg class="ic" style="left:1999.0px;top:814.0px" width="30" height="30" viewBox="0 0 30 30"><path d="M7.9 2.6H17.6L23.6 8.7V22.4A2.5 2.5 0 0 1 21.1 24.9H7.9A2.5 2.5 0 0 1 5.4 22.4V5.1A2.5 2.5 0 0 1 7.9 2.6Z" fill="none" stroke="#3d4756" stroke-width="2.1" stroke-linejoin="round"/><path d="M17.4 2.9V6.8A1.8 1.8 0 0 0 19.2 8.6H23.3" fill="none" stroke="#3d4756" stroke-width="2.1" stroke-linejoin="round"/><path d="M9.4 10.3H12.4M9.4 14.9H19.2M9.4 19.4H19.2" stroke="#3d4756" stroke-width="2.1" stroke-linecap="round"/></svg>
<svg class="ic" style="left:2054.0px;top:814.0px" width="30" height="30" viewBox="0 0 30 30"><path d="M8.4 2.7L12.4 4.3C13.2 4.6 13.5 5.4 13.1 6.1L12.2 7.8L16.4 16.3H22.1C22.9 16.3 23.5 16.9 23.5 17.7V20.4C23.5 21.2 22.9 21.8 22.1 21.8H13.4C12.8 21.8 12.3 21.5 12 21L5.3 8.7C5 8.1 5 7.5 5.3 7L7 3.3C7.3 2.8 7.8 2.5 8.4 2.7Z" fill="#e3e5e8" stroke="#3d4756" stroke-width="2.1" stroke-linejoin="round"/><path d="M12.3 24.6H22.9" stroke="#3d4756" stroke-width="2.1" stroke-linecap="round"/></svg>
<div class="row sub" style="top:868px;height:75px"></div>
<div class="vl" style="left:577px;top:868px;height:75px"></div>
<div class="vl" style="left:671px;top:868px;height:75px"></div>
<div class="vl" style="left:872px;top:868px;height:75px"></div>
<div class="vl" style="left:1073px;top:868px;height:75px"></div>
<div class="vl" style="left:1187px;top:868px;height:75px"></div>
<div class="vl" style="left:1446px;top:868px;height:75px"></div>
<div class="vl" style="left:1922px;top:868px;height:75px"></div>
<div class="stripe" style="top:866px;height:77px"></div>
<div class="t1" style="left:417px;top:889.5px"><a>VN</a> 245</div>
<div class="t1" style="left:585px;top:889.5px">0</div>
<div class="t2" style="left:679px;top:873.5px"><a>HAN</a><br>05/01/26 8:00</div>
<div class="t2" style="left:880px;top:873.5px"><a>SGN</a><br>05/01/26 10:10</div>
<div class="t1 ctr" style="left:1075px;width:112px;top:889.5px"><a>359</a></div>
<div class="t2 ctr" style="left:1189px;width:257px;top:873.5px">Daily<br>60% / 26m</div>
<div class="cc" style="left:1454px;top:867.5px"><span class="g">J5</span> <span class="g">C5</span> <span class="g">D1</span> I0 <span class="g">O5</span> <span class="g">W1</span> <span class="g">Z1</span> U0 Y0 B0 M0 S0<br>H0 K0 L0 Q0 N0 R0 T0 E0 P0 A0 G0 X0</div>
<svg class="ic" style="left:1944.0px;top:890.5px" width="30" height="30" viewBox="0 0 30 30"><path d="M8.9 9.2A6.3 6.3 0 0 1 21.5 9.2V12.2C21.5 14.6 22.4 15.9 24.6 17.1C25.9 17.8 25.7 18.9 24.4 18.9H6C4.7 18.9 4.5 17.8 5.8 17.1C8 15.9 8.9 14.6 8.9 12.2Z" fill="none" stroke="#3d4756" stroke-width="2.1" stroke-linejoin="round"/><path d="M12.9 23.2Q15.2 25.6 17.5 23.2" fill="none" stroke="#3d4756" stroke-width="2.1" stroke-linecap="round"/></svg>
<svg class="ic" style="left:1999.0px;top:890.5px" width="30" height="30" viewBox="0 0 30 30"><path d="M7.9 2.6H17.6L23.6 8.7V22.4A2.5 2.5 0 0 1 21.1 24.9H7.9A2.5 2.5 0 0 1 5.4 22.4V5.1A2.5 2.5 0 0 1 7.9 2.6Z" fill="none" stroke="#3d4756" stroke-width="2.1" stroke-linejoin="round"/><path d="M17.4 2.9V6.8A1.8 1.8 0 0 0 19.2 8.6H23.3" fill="none" stroke="#3d4756" stroke-width="2.1" stroke-linejoin="round"/><path d="M9.4 10.3H12.4M9.4 14.9H19.2M9.4 19.4H19.2" stroke="#3d4756" stroke-width="2.1" stroke-linecap="round"/></svg>
<svg class="ic" style="left:2054.0px;top:890.5px" width="30" height="30" viewBox="0 0 30 30"><path d="M8.4 2.7L12.4 4.3C13.2 4.6 13.5 5.4 13.1 6.1L12.2 7.8L16.4 16.3H22.1C22.9 16.3 23.5 16.9 23.5 17.7V20.4C23.5 21.2 22.9 21.8 22.1 21.8H13.4C12.8 21.8 12.3 21.5 12 21L5.3 8.7C5 8.1 5 7.5 5.3 7L7 3.3C7.3 2.8 7.8 2.5 8.4 2.7Z" fill="#e3e5e8" stroke="#3d4756" stroke-width="2.1" stroke-linejoin="round"/><path d="M12.3 24.6H22.9" stroke="#3d4756" stroke-width="2.1" stroke-linecap="round"/></svg>
<div class="connw" style="top:945px"></div>
<div class="conn" style="top:947px"><span>2 Connections</span></div>
<div class="hl" style="top:975px"></div>
<div class="row" style="top:977px;height:75px"></div>
<div class="hl" style="top:1052px"></div>
<div class="vl" style="left:577px;top:977px;height:75px"></div>
<div class="vl" style="left:671px;top:977px;height:75px"></div>
<div class="vl" style="left:872px;top:977px;height:75px"></div>
<div class="vl" style="left:1073px;top:977px;height:75px"></div>
<div class="vl" style="left:1187px;top:977px;height:75px"></div>
<div class="vl" style="left:1446px;top:977px;height:75px"></div>
<div class="vl" style="left:1922px;top:977px;height:75px"></div>
<div class="t1" style="left:413px;top:998.5px"><a>BA</a> 785</div>
<div class="t1" style="left:585px;top:998.5px">0</div>
<div class="t2" style="left:679px;top:982.5px"><a>ARN</a><br>04/01/26 7:15</div>
<div class="t2" style="left:880px;top:982.5px"><a>LHR</a><br>04/01/26 9:20</div>
<div class="t1 ctr" style="left:1075px;width:112px;top:998.5px"><a>319</a></div>
<div class="t2 ctr" style="left:1189px;width:257px;top:982.5px">Su<br>NA / NA</div>
<div class="cc" style="left:1454px;top:976.5px">J0 C0 D0 R0 I0 Y0 B0 H0 K0 M0 L0 V0<br>N0 O0 Q0 S0 G0</div>
<svg class="ic" style="left:1944.0px;top:999.5px" width="30" height="30" viewBox="0 0 30 30"><path d="M8.9 9.2A6.3 6.3 0 0 1 21.5 9.2V12.2C21.5 14.6 22.4 15.9 24.6 17.1C25.9 17.8 25.7 18.9 24.4 18.9H6C4.7 18.9 4.5 17.8 5.8 17.1C8 15.9 8.9 14.6 8.9 12.2Z" fill="none" stroke="#3d4756" stroke-width="2.1" stroke-linejoin="round"/><path d="M12.9 23.2Q15.2 25.6 17.5 23.2" fill="none" stroke="#3d4756" stroke-width="2.1" stroke-linecap="round"/></svg>
<svg class="ic" style="left:1999.0px;top:999.5px" width="30" height="30" viewBox="0 0 30 30"><path d="M7.9 2.6H17.6L23.6 8.7V22.4A2.5 2.5 0 0 1 21.1 24.9H7.9A2.5 2.5 0 0 1 5.4 22.4V5.1A2.5 2.5 0 0 1 7.9 2.6Z" fill="none" stroke="#3d4756" stroke-width="2.1" stroke-linejoin="round"/><path d="M17.4 2.9V6.8A1.8 1.8 0 0 0 19.2 8.6H23.3" fill="none" stroke="#3d4756" stroke-width="2.1" stroke-linejoin="round"/><path d="M9.4 10.3H12.4M9.4 14.9H19.2M9.4 19.4H19.2" stroke="#3d4756" stroke-width="2.1" stroke-linecap="round"/></svg>
<svg class="ic" style="left:2054.0px;top:999.5px" width="30" height="30" viewBox="0 0 30 30"><path d="M8.4 2.7L12.4 4.3C13.2 4.6 13.5 5.4 13.1 6.1L12.2 7.8L16.4 16.3H22.1C22.9 16.3 23.5 16.9 23.5 17.7V20.4C23.5 21.2 22.9 21.8 22.1 21.8H13.4C12.8 21.8 12.3 21.5 12 21L5.3 8.7C5 8.1 5 7.5 5.3 7L7 3.3C7.3 2.8 7.8 2.5 8.4 2.7Z" fill="#e3e5e8" stroke="#3d4756" stroke-width="2.1" stroke-linejoin="round"/><path d="M12.3 24.6H22.9" stroke="#3d4756" stroke-width="2.1" stroke-linecap="round"/></svg>
<div class="row sub" style="top:1054px;height:74px"></div>
<div class="hl" style="top:1128px"></div>
<div class="vl" style="left:577px;top:1054px;height:74px"></div>
<div class="vl" style="left:671px;top:1054px;height:74px"></div>
<div class="vl" style="left:872px;top:1054px;height:74px"></div>
<div class="vl" style="left:1073px;top:1054px;height:74px"></div>
<div class="vl" style="left:1187px;top:1054px;height:74px"></div>
<div class="vl" style="left:1446px;top:1054px;height:74px"></div>
<div class="vl" style="left:1922px;top:1054px;height:74px"></div>
<div class="stripe" style="top:1054px;height:74px"></div>
<div class="t1" style="left:417px;top:1075.0px"><a>TG</a> 911</div>
<div class="t1" style="left:585px;top:1075.0px">0</div>
<div class="t2" style="left:679px;top:1059.0px"><a>LHR</a><br>04/01/26 11:50</div>
<div class="t2" style="left:880px;top:1059.0px"><a>BKK</a><br>05/01/26 6:15</div>
<div class="t1 ctr" style="left:1075px;width:112px;top:1075.0px"><a>77W</a></div>
<div class="t2 ctr" style="left:1189px;width:257px;top:1059.0px">Daily<br>67% / 19m</div>
<div class="cc" style="left:1454px;top:1053.0px">F0 A0 P0 C0 D0 J0 Z0 Y0 B0 M0 H0 Q0<br>T0 K0 S0 V0 W0 L0</div>
<svg class="ic" style="left:1944.0px;top:1076.0px" width="30" height="30" viewBox="0 0 30 30"><path d="M8.9 9.2A6.3 6.3 0 0 1 21.5 9.2V12.2C21.5 14.6 22.4 15.9 24.6 17.1C25.9 17.8 25.7 18.9 24.4 18.9H6C4.7 18.9 4.5 17.8 5.8 17.1C8 15.9 8.9 14.6 8.9 12.2Z" fill="none" stroke="#3d4756" stroke-width="2.1" stroke-linejoin="round"/><path d="M12.9 23.2Q15.2 25.6 17.5 23.2" fill="none" stroke="#3d4756" stroke-width="2.1" stroke-linecap="round"/></svg>
<svg class="ic" style="left:1999.0px;top:1076.0px" width="30" height="30" viewBox="0 0 30 30"><path d="M7.9 2.6H17.6L23.6 8.7V22.4A2.5 2.5 0 0 1 21.1 24.9H7.9A2.5 2.5 0 0 1 5.4 22.4V5.1A2.5 2.5 0 0 1 7.9 2.6Z" fill="none" stroke="#3d4756" stroke-width="2.1" stroke-linejoin="round"/><path d="M17.4 2.9V6.8A1.8 1.8 0 0 0 19.2 8.6H23.3" fill="none" stroke="#3d4756" stroke-width="2.1" stroke-linejoin="round"/><path d="M9.4 10.3H12.4M9.4 14.9H19.2M9.4 19.4H19.2" stroke="#3d4756" stroke-width="2.1" stroke-linecap="round"/></svg>
<svg class="ic" style="left:2054.0px;top:1076.0px" width="30" height="30" viewBox="0 0 30 30"><path d="M8.4 2.7L12.4 4.3C13.2 4.6 13.5 5.4 13.1 6.1L12.2 7.8L16.4 16.3H22.1C22.9 16.3 23.5 16.9 23.5 17.7V20.4C23.5 21.2 22.9 21.8 22.1 21.8H13.4C12.8 21.8 12.3 21.5 12 21L5.3 8.7C5 8.1 5 7.5 5.3 7L7 3.3C7.3 2.8 7.8 2.5 8.4 2.7Z" fill="#e3e5e8" stroke="#3d4756" stroke-width="2.1" stroke-linejoin="round"/><path d="M12.3 24.6H22.9" stroke="#3d4756" stroke-width="2.1" stroke-linecap="round"/></svg>
<div class="row sub" style="top:1130px;height:75px"></div>
<div class="vl" style="left:577px;top:1130px;height:75px"></div>
<div class="vl" style="left:671px;top:1130px;height:75px"></div>
<div class="vl" style="left:872px;top:1130px;height:75px"></div>
<div class="vl" style="left:1073px;top:1130px;height:75px"></div>
<div class="vl" style="left:1187px;top:1130px;height:75px"></div>
<div class="vl" style="left:1446px;top:1130px;height:75px"></div>
<div class="vl" style="left:1922px;top:1130px;height:75px"></div>
<div class="stripe" style="top:1128px;height:77px"></div>
<div class="t1" style="left:417px;top:1151.5px"><a>TG</a> 550</div>
<div class="t1" style="left:585px;top:1151.5px">0</div>
<div class="t2" style="left:679px;top:1135.5px"><a>BKK</a><br>05/01/26 7:45</div>
<div class="t2" style="left:880px;top:1135.5px"><a>SGN</a><br>05/01/26 9:15</div>
<div class="t1 ctr" style="left:1075px;width:112px;top:1151.5px"><a>320</a></div>
<div class="t2 ctr" style="left:1189px;width:257px;top:1135.5px">Daily<br>46% / 22m</div>
<div class="cc" style="left:1454px;top:1129.5px">C0 D0 J0 Z0 Y0 B0 M0 H0 Q0 T0 K0 S0<br>V0 W0 L0</div>
<svg class="ic" style="left:1944.0px;top:1152.5px" width="30" height="30" viewBox="0 0 30 30"><path d="M8.9 9.2A6.3 6.3 0 0 1 21.5 9.2V12.2C21.5 14.6 22.4 15.9 24.6 17.1C25.9 17.8 25.7 18.9 24.4 18.9H6C4.7 18.9 4.5 17.8 5.8 17.1C8 15.9 8.9 14.6 8.9 12.2Z" fill="none" stroke="#3d4756" stroke-width="2.1" stroke-linejoin="round"/><path d="M12.9 23.2Q15.2 25.6 17.5 23.2" fill="none" stroke="#3d4756" stroke-width="2.1" stroke-linecap="round"/></svg>
<svg class="ic" style="left:1999.0px;top:1152.5px" width="30" height="30" viewBox="0 0 30 30"><path d="M7.9 2.6H17.6L23.6 8.7V22.4A2.5 2.5 0 0 1 21.1 24.9H7.9A2.5 2.5 0 0 1 5.4 22.4V5.1A2.5 2.5 0 0 1 7.9 2.6Z" fill="none" stroke="#3d4756" stroke-width="2.1" stroke-linejoin="round"/><path d="M17.4 2.9V6.8A1.8 1.8 0 0 0 19.2 8.6H23.3" fill="none" stroke="#3d4756" stroke-width="2.1" stroke-linejoin="round"/><path d="M9.4 10.3H12.4M9.4 14.9H19.2M9.4 19.4H19.2" stroke="#3d4756" stroke-width="2.1" stroke-linecap="round"/></svg>
<svg class="ic" style="left:2054.0px;top:1152.5px" width="30" height="30" viewBox="0 0 30 30"><path d="M8.4 2.7L12.4 4.3C13.2 4.6 13.5 5.4 13.1 6.1L12.2 7.8L16.4 16.3H22.1C22.9 16.3 23.5 16.9 23.5 17.7V20.4C23.5 21.2 22.9 21.8 22.1 21.8H13.4C12.8 21.8 12.3 21.5 12 21L5.3 8.7C5 8.1 5 7.5 5.3 7L7 3.3C7.3 2.8 7.8 2.5 8.4 2.7Z" fill="#e3e5e8" stroke="#3d4756" stroke-width="2.1" stroke-linejoin="round"/><path d="M12.3 24.6H22.9" stroke="#3d4756" stroke-width="2.1" stroke-linecap="round"/></svg>
</div>
<div class="tb">
<div class="blurwrap">
<div style="position:absolute;left:20px;top:-40px;width:311px;height:156px;background:#e8effc;border-radius:8px"></div>
<div style="position:absolute;left:405px;top:-40px;width:1700px;height:62px;background:#e2eafa"></div>
<div style="position:absolute;left:405px;top:78px;width:1700px;height:60px;background:#eeeff1"></div>
</div>
<div class="status-l">13:53</div><div class="status-l" style="left:108px">lör 3 jan.</div>
<svg style="position:absolute;left:1981px;top:22px" width="30" height="21" viewBox="0 0 30 21"><g fill="#000" stroke="#000" stroke-width="0.9" stroke-linejoin="round"><path d="M0.6 8.1A18.5 18.5 0 0 1 28.9 8.1L26 10.5A14.7 14.7 0 0 0 3.5 10.5Z"/><path d="M5.6 12.3A12 12 0 0 1 23.9 12.3L21 14.7A8.3 8.3 0 0 0 8.5 14.7Z"/><path d="M14.75 19.6L10.7 16.3A5.5 5.5 0 0 1 18.8 16.3Z"/></g></svg>
<div class="status-r">78 %</div>
<div class="batt"><div class="battin"></div></div><div class="nub"></div>
<div class="pill">expertflyer.com</div>
</div>
</body></html>
